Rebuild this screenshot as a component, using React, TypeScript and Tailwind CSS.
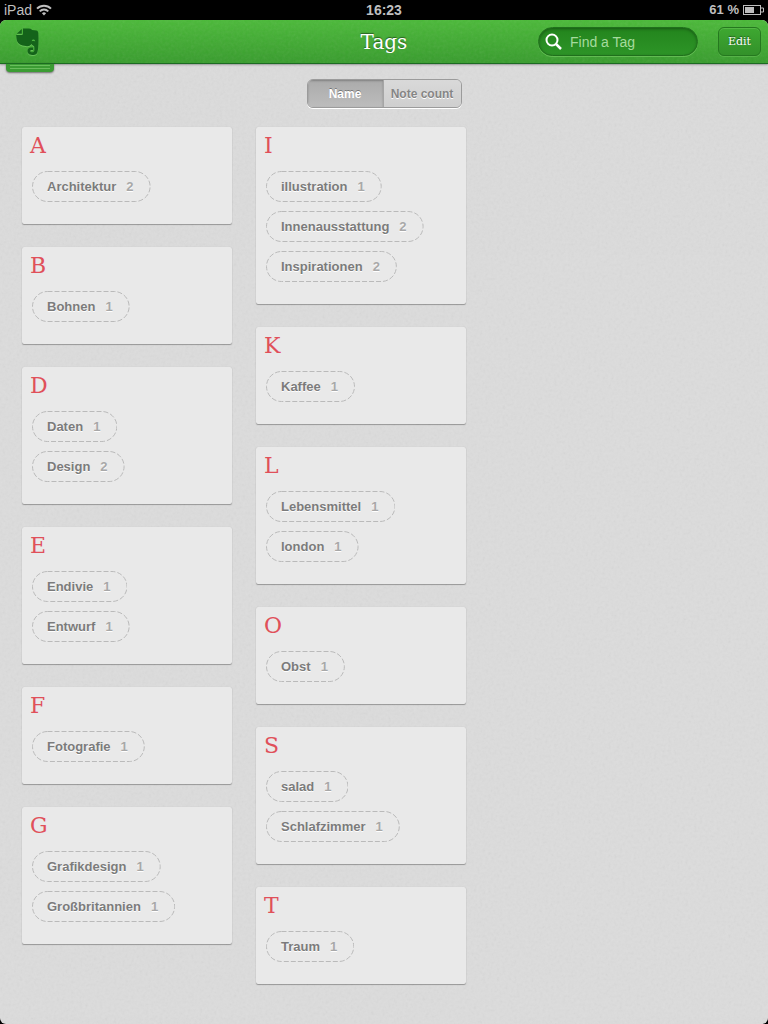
import { useState } from "react";

type Tag = { name: string; count: number };
type Group = { letter: string; tags: Tag[] };

const columns: Group[][] = [
  [
    { letter: "A", tags: [{ name: "Architektur", count: 2 }] },
    { letter: "B", tags: [{ name: "Bohnen", count: 1 }] },
    { letter: "D", tags: [{ name: "Daten", count: 1 }, { name: "Design", count: 2 }] },
    { letter: "E", tags: [{ name: "Endivie", count: 1 }, { name: "Entwurf", count: 1 }] },
    { letter: "F", tags: [{ name: "Fotografie", count: 1 }] },
    { letter: "G", tags: [{ name: "Grafikdesign", count: 1 }, { name: "Großbritannien", count: 1 }] },
  ],
  [
    {
      letter: "I",
      tags: [
        { name: "illustration", count: 1 },
        { name: "Innenausstattung", count: 2 },
        { name: "Inspirationen", count: 2 },
      ],
    },
    { letter: "K", tags: [{ name: "Kaffee", count: 1 }] },
    { letter: "L", tags: [{ name: "Lebensmittel", count: 1 }, { name: "london", count: 1 }] },
    { letter: "O", tags: [{ name: "Obst", count: 1 }] },
    { letter: "S", tags: [{ name: "salad", count: 1 }, { name: "Schlafzimmer", count: 1 }] },
    { letter: "T", tags: [{ name: "Traum", count: 1 }] },
  ],
];

// Fine paper grain laid over the green bar and the grey page
function Grain({ id }: { id: string }) {
  return (
    <svg aria-hidden="true" className="pointer-events-none absolute inset-0 h-full w-full opacity-10">
      <filter id={id}>
        <feTurbulence type="fractalNoise" baseFrequency="0.35" numOctaves="2" />
        <feColorMatrix type="saturate" values="0" />
      </filter>
      <rect width="100%" height="100%" filter={`url(#${id})`} />
    </svg>
  );
}

function Elephant() {
  return (
    <svg
      viewBox="0 0 24 28"
      className="h-7 w-6 text-[#14631a] drop-shadow-[0_1px_0_rgba(140,220,120,0.5)]"
      fill="currentColor"
    >
      <path d="M5.800 1 .8 5.800h5z" />
      <path d="M7 .5h6c2 0 2.500 1 3 1.500l4.500.5c1.500.5 2 1.500 2 5.500.2 6 0 12-1 16-.5 2-2 3-4 3-3.500 0-6-1-6-4 0-2 1.500-3.500 3.500-3.500h2V22h-1.500c-.8 0-1.200.4-1.200 1 0 1 .7 1.300 2.700 1.200 1.500 0 1.500-2.200 1.200-5.700-1.200-1-2.200-1.500-2.700-2.500-1.500 2-3.500 2.500-5.500 2-5-.5-8-2-9-5C.3 10.500.2 8 .2 7h5.300C6.500 7 7 6.500 7 5.500z" />
      <path d="M15.800 13.200c0-2.200 3.200-2.200 3.400.3-1.200-.6-2.200-.6-3.400-.3z" fill="#4cb041" />
    </svg>
  );
}

function StatusBar() {
  return (
    <div className="grid h-5 grid-cols-[1fr_auto_1fr] items-center bg-black px-1 text-sm leading-5 text-[#bfbfbf]">
      <div className="flex items-center gap-1">
        <span>iPad</span>
        <svg viewBox="0 0 16 12" className="h-3 w-4" fill="none" stroke="currentColor" strokeWidth="2">
          <path d="M1 4.600C5 .7 11 .7 15 4.600" />
          <path d="M3.700 7.400C6.200 5 9.800 5 12.300 7.400" />
          <path d="M8 11.500 5.900 9.300a3 3 0 0 1 4.200 0z" fill="currentColor" stroke="none" />
        </svg>
      </div>
      <span className="font-bold">16:23</span>
      <div className="flex items-center justify-end gap-1">
        <span className="text-[13px] font-bold">61 %</span>
        <svg viewBox="0 0 21 10" className="h-[10px] w-[21px]">
          <rect x=".5" y=".5" width="17" height="9" fill="none" stroke="currentColor" />
          <rect x="2" y="2" width="9" height="6" fill="currentColor" />
          <path d="M18 3h2.500v4H18" fill="none" stroke="currentColor" />
        </svg>
      </div>
    </div>
  );
}

function Header() {
  return (
    <header className="relative grid h-11 grid-cols-[1fr_auto_1fr] items-center rounded-t-md border-b border-[#1c6b22] bg-linear-to-b from-[#4ab938] to-[#379c2c] px-[7px] shadow-[0_1px_2px_rgba(0,0,0,0.3)]">
      <Grain id="grain-bar" />
      {/* stacked pages below the bar */}
      <div className="absolute top-[43px] left-[6px] h-[9px] w-[48px] rounded-b-sm border-t border-[#1c6b22] bg-[#3b9c33] shadow-[0_1px_2px_rgba(0,0,0,0.5)]">
        <div className="mx-1 mt-px h-px bg-[#69bd5c]" />
        <div className="mx-1 mt-[2px] h-px bg-[#69bd5c]" />
      </div>
      <a href="#home" aria-label="Evernote" className="relative w-fit pl-[9px]">
        <Elephant />
      </a>
      <h1 className="relative font-['DejaVu_Serif',serif] text-xl leading-6 text-white [text-shadow:0_-1px_1px_rgba(0,0,0,0.45)]">
        Tags
      </h1>
      <div className="relative flex items-center justify-end gap-5">
        <label className="flex h-[29px] w-40 items-center gap-2 rounded-full border border-[#20701c] bg-linear-to-b from-[#23851d] to-[#2d9427] px-[6px] shadow-[inset_0_1px_3px_rgba(0,0,0,0.35),0_1px_0_rgba(140,220,120,0.45)]">
          <svg viewBox="0 0 17 17" className="h-[17px] w-[17px] shrink-0" fill="none" stroke="white" strokeWidth="2">
            <circle cx="7" cy="7" r="5.500" />
            <path d="m11 11 5 5" strokeWidth="2.500" />
          </svg>
          <input
            type="text"
            aria-label="Find a Tag"
            placeholder="Find a Tag"
            className="w-full min-w-0 bg-transparent text-sm text-white outline-none placeholder:text-[#a5db9d]"
          />
        </label>
        <button className="h-[29px] w-[43px] rounded-md border border-[#25781f] bg-linear-to-b from-[#3ea831] to-[#33912a] pt-[2px] font-['DejaVu_Serif',serif] text-[11px] text-white shadow-[inset_0_1px_0_rgba(140,220,120,0.3),0_1px_0_rgba(140,220,120,0.3)] [text-shadow:0_-1px_1px_rgba(0,0,0,0.5)]">
          Edit
        </button>
      </div>
    </header>
  );
}

function TagPill({ name, count }: Tag) {
  return (
    <button className="relative flex h-[31px] w-fit items-center gap-[10px] pr-[17px] pl-[15px] text-[13px] font-bold text-[#7b7b7b] [text-shadow:0_1px_0_white]">
      <svg aria-hidden="true" className="absolute inset-0 h-full w-full">
        <rect
          x=".5"
          y=".5"
          rx="15"
          className="h-[calc(100%-1px)] w-[calc(100%-1px)]"
          fill="none"
          stroke="#bababa"
          strokeDasharray="5 2"
        />
      </svg>
      <span>{name}</span>
      <span className="text-[#a8a8a8]">{count}</span>
    </button>
  );
}

function TagCard({ letter, tags }: Group) {
  return (
    <section className="rounded-xs bg-[#e9e9e9] px-[10px] pb-[22px] shadow-[0_1px_1px_rgba(0,0,0,0.3),0_0_1px_rgba(0,0,0,0.15)]">
      <h2 className="-ml-[2px] pt-[3px] pb-[9px] font-['DejaVu_Serif',serif] text-[22px] leading-8 text-[#e0505a]">
        {letter}
      </h2>
      <div className="flex flex-col gap-[9px]">
        {tags.map((tag) => (
          <TagPill key={tag.name} {...tag} />
        ))}
      </div>
    </section>
  );
}

export default function App() {
  const [sort, setSort] = useState("name");

  const segment = (active: boolean) =>
    active
      ? "bg-linear-to-b from-[#ababab] to-[#bcbcbc] text-white shadow-[inset_0_1px_2px_rgba(0,0,0,0.25)] [text-shadow:0_-1px_0_rgba(0,0,0,0.35)]"
      : "bg-linear-to-b from-[#d9d9d9] to-[#cfcfcf] text-[#858585] [text-shadow:0_1px_0_white]";

  return (
    <div className="flex min-h-screen flex-col bg-black font-['Liberation_Sans',Arial,sans-serif]">
      <StatusBar />
      <div className="flex flex-1 flex-col rounded-md bg-[#dcdcdc]">
        <div className="relative z-10">
          <Header />
        </div>
        <main className="relative flex-1 overflow-hidden rounded-b-md px-[22px] pt-[15px] pb-6">
          <Grain id="grain-page" />
          <div className="relative mx-auto flex h-[29px] w-[155px] overflow-hidden rounded-md border border-[#9b9b9b] text-xs font-bold shadow-[0_1px_0_white]">
            <button
              aria-pressed={sort === "name"}
              onClick={() => setSort("name")}
              className={`flex-1 border-r border-[#a5a5a5] ${segment(sort === "name")}`}
            >
              Name
            </button>
            <button
              aria-pressed={sort === "count"}
              onClick={() => setSort("count")}
              className={`w-[77px] whitespace-nowrap ${segment(sort === "count")}`}
            >
              Note count
            </button>
          </div>
          <div className="relative mt-[19px] grid grid-cols-[repeat(auto-fill,210px)] gap-6">
            {columns.map((groups) => (
              <div key={groups[0].letter} className="flex flex-col gap-[23px]">
                {groups.map((group) => (
                  <TagCard key={group.letter} {...group} />
                ))}
              </div>
            ))}
          </div>
        </main>
      </div>
    </div>
  );
}
